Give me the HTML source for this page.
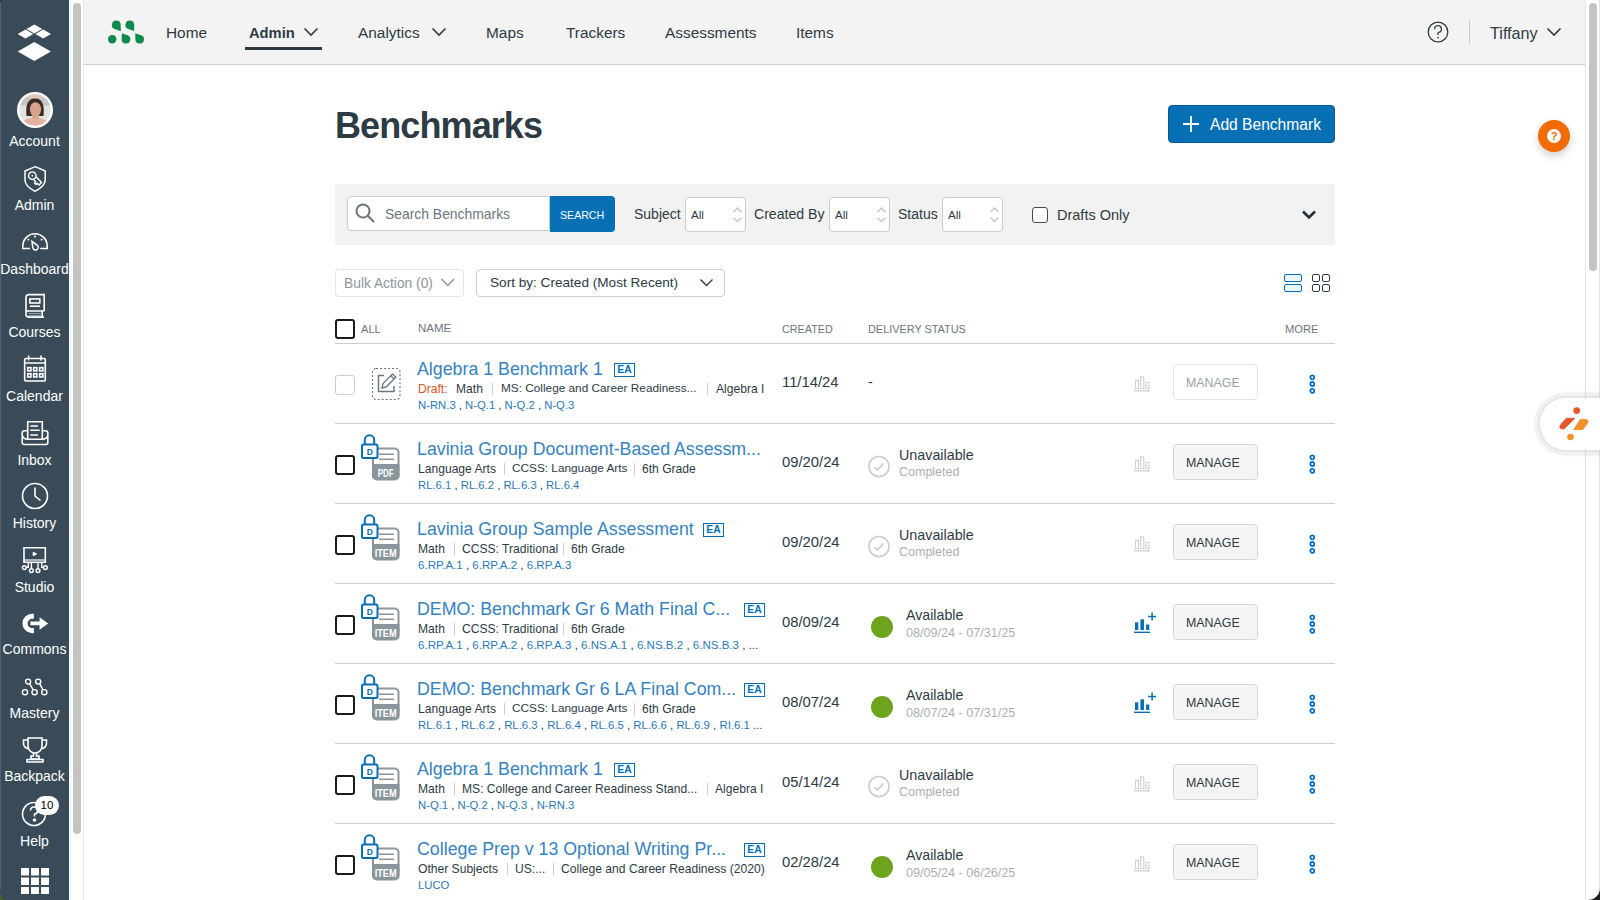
<!DOCTYPE html>
<html><head><meta charset="utf-8">
<style>
*{box-sizing:border-box;}
html,body{margin:0;padding:0;}
body{width:1600px;height:900px;overflow:hidden;position:relative;background:#fff;font-family:"Liberation Sans",sans-serif;color:#2d3b45;}
.a{position:absolute;}
.t{position:absolute;white-space:nowrap;line-height:1;}
/* sidebar */
#sb{position:absolute;left:0;top:0;width:69px;height:900px;background:#394b58;border-bottom-left-radius:8px;}
#sbedge{position:absolute;left:0;top:0;width:1px;height:890px;background:#56636c;}
#sbcorner{position:absolute;left:0;top:885px;width:12px;height:15px;background:#4c5e2a;}
.sbl{position:absolute;left:0;width:69px;text-align:center;color:#fff;font-size:14px;line-height:14px;white-space:nowrap;}
.sbi{position:absolute;left:21px;width:28px;height:28px;}
#lsc{position:absolute;left:69px;top:0;width:15px;height:900px;background:#fff;border-left:3px solid #f2f8fb;border-right:1px solid #e8e8e8;}
#lthumb{position:absolute;left:73px;top:3px;width:8px;height:831px;background:#c4c4c4;border-radius:4px;}
/* nav */
#nav{position:absolute;left:84px;top:0;width:1501px;height:65px;background:#f3f3f3;border-bottom:1px solid #c7cdd1;}
.nv{position:absolute;top:1px;font-size:15.4px;line-height:64px;color:#2d3b45;white-space:nowrap;}
/* right scrollbar */
#rsc{position:absolute;left:1585px;top:0;width:15px;height:900px;background:#fff;border-left:1px solid #e6e6e6;border-right:1px solid #e6e6e6;}
#rthumb{position:absolute;left:1589px;top:3px;width:8px;height:268px;background:#c4c4c4;border-radius:4px;}
</style></head>
<body>
<!-- SIDEBAR -->
<div id="sbcorner"></div>
<div id="sb">
  <!-- logo -->
  <svg class="a" style="left:17px;top:24px" width="36" height="38" viewBox="0 0 36 38">
    <polygon points="17.35,0.50 25.15,5.0 17.35,9.50 9.55,5.0" fill="#fff"/><polygon points="8.5,5.60 16.30,10.1 8.5,14.60 0.70,10.1" fill="#fff"/><polygon points="26.2,5.60 34.00,10.1 26.2,14.60 18.40,10.1" fill="#fff"/><polygon points="17.3,17.90 33.90,27.4 17.3,36.90 0.70,27.4" fill="#fff"/>
  </svg>
  <!-- avatar -->
  <svg class="a" style="left:17px;top:92px" width="36" height="36" viewBox="0 0 36 36">
    <defs><clipPath id="avc"><circle cx="18" cy="18" r="15.7"/></clipPath></defs>
    <circle cx="18" cy="18" r="18" fill="#fff"/>
    <g clip-path="url(#avc)">
      <rect x="0" y="0" width="36" height="36" fill="#e3e3e1"/>
      <rect x="0" y="0" width="36" height="6" fill="#e2c7bd"/>
      <rect x="0" y="6" width="36" height="7.5" fill="#c3c6c8"/>
      <path d="M9.5 24 C8.5 14 10 6.5 18 6.5 C26 6.5 27.5 14 26.5 24 Z" fill="#3b2b23"/>
      <ellipse cx="18.5" cy="17.5" rx="5.6" ry="7.3" fill="#d6a288"/>
      <ellipse cx="18" cy="36" rx="15" ry="10.5" fill="#e6b29e"/>
      <rect x="15.5" y="22" width="6" height="5" fill="#d6a288"/>
    </g>
  </svg>
  <div class="sbl" style="top:134px">Account</div>

  <!-- admin shield -->
  <svg class="a" style="left:21px;top:165px" width="28" height="28" viewBox="0 0 28 28" fill="none" stroke="#fff" stroke-width="1.5" stroke-linejoin="round">
    <path d="M14.3 1.6 L24.2 6 V15 C24.2 19.5 19.5 23.5 14 26.4 C8.5 23.5 4 19.5 4 15 V6 Z"/>
    <g transform="rotate(45 11.3 10.7)">
      <circle cx="11.3" cy="10.7" r="3.7"/>
      <circle cx="11.3" cy="10.7" r="0.9" fill="#fff" stroke="none"/>
      <path d="M15 8.9 H22.6 V12.5 H20.2 V14.2 H17.8 V12.5 H15"/>
    </g>
  </svg>
  <div class="sbl" style="top:198px">Admin</div>

  <!-- dashboard -->
  <svg class="a" style="left:21px;top:231px" width="28" height="22" viewBox="0 0 28 22" fill="none" stroke="#fff" stroke-width="1.6">
    <path d="M9 17.5 H1.8 V15 A12.2 12.2 0 0 1 26.2 15 V17.5 H19.2"/>
    <path d="M14 4.5 V6.5 M6.8 8 L8 9.2 M21.2 8 L20 9.2"/>
    <path d="M11.00 10.30 L16.12 14.14 A2.7 2.7 0 1 1 11.82 16.65 Z" stroke-width="1.5"/>
  </svg>
  <div class="sbl" style="top:262px">Dashboard</div>

  <!-- courses -->
  <svg class="a" style="left:21px;top:290px" width="28" height="30" viewBox="0 0 28 30" fill="none" stroke="#fff" stroke-width="1.6">
    <path d="M23.2 21 V4.6 H7.5 A2.5 2.5 0 0 0 5 7.1 V24.6 A2.5 2.5 0 0 0 7.5 27.1 H23"/>
    <path d="M5 21 H23.2 M21.2 21 V27.1"/>
    <path d="M7.5 23.5 H20.5 M7.5 25.5 H20.5" stroke="#9aa3aa" stroke-width="1.2"/>
    <rect x="8.9" y="8.9" width="9.9" height="4.1"/>
    <path d="M8.9 16.2 H19"/>
  </svg>
  <div class="sbl" style="top:325px">Courses</div>

  <!-- calendar -->
  <svg class="a" style="left:21px;top:352px" width="28" height="32" viewBox="0 0 28 32" fill="none" stroke="#fff" stroke-width="1.6">
    <rect x="3.65" y="6.5" width="20.65" height="22.5" rx="1.2"/>
    <path d="M3.65 11 H24.3 M7.6 3.6 V8.6 M20 3.6 V8.6"/>
    <rect x="6.75" y="15.65" width="3.2" height="3.2"/><rect x="12.65" y="15.65" width="3.2" height="3.2"/><rect x="18.65" y="15.65" width="3.2" height="3.2"/><rect x="6.75" y="21.75" width="3.2" height="3.2"/><rect x="12.65" y="21.75" width="3.2" height="3.2"/><rect x="18.65" y="21.75" width="3.2" height="3.2"/>
  </svg>
  <div class="sbl" style="top:389px">Calendar</div>

  <!-- inbox -->
  <svg class="a" style="left:21px;top:415px" width="28" height="32" viewBox="0 0 28 32" fill="none" stroke="#fff" stroke-width="1.6">
    <path d="M6.7 24 V6.8 H21.3 V24"/>
    <path d="M9.3 11 H17 M9.3 15.3 H18.7 M9.3 20 H17"/>
    <path d="M6.7 15.7 H3.5 A2.3 2.3 0 0 0 1.2 18 V27.5 A2 2 0 0 0 3.2 29.5 H24.8 A2 2 0 0 0 26.8 27.5 V18 A2.3 2.3 0 0 0 24.5 15.7 H21.3"/>
    <path d="M1.4 20.8 Q2.5 24.2 6.7 24.2 H21.3 Q25.5 24.2 26.6 20.8"/>
  </svg>
  <div class="sbl" style="top:453px">Inbox</div>

  <!-- history -->
  <svg class="sbi" style="top:482px" viewBox="0 0 28 28" fill="none" stroke="#fff" stroke-width="1.6">
    <circle cx="14" cy="14" r="12.5"/>
    <path d="M14 5.5 V14 L19.5 18.5"/>
  </svg>
  <div class="sbl" style="top:516px">History</div>

  <!-- studio -->
  <svg class="a" style="left:21px;top:546px" width="28" height="28" viewBox="0 0 28 28" fill="none" stroke="#fff" stroke-width="1.6">
    <path d="M3 1.7 H24.3 V16.3 H3 Z"/>
    <path d="M3 14 H24.3" stroke-width="1.2"/>
    <path d="M12.2 6.2 L15.6 8 L12.2 9.8 Z" fill="#fff" stroke-width="1"/>
    <path d="M7.3 16.5 V21.2 H5.3 M10.4 16.5 V22.6 M17 16.5 V22.6 M20.7 16.5 V21.2 H22.4" stroke-width="1.4"/>
    <circle cx="3.3" cy="21.6" r="1.9" stroke-width="1.4"/><circle cx="10.4" cy="24.6" r="1.9" stroke-width="1.4"/><circle cx="17" cy="24.6" r="1.9" stroke-width="1.4"/><circle cx="24.4" cy="21.6" r="1.9" stroke-width="1.4"/>
  </svg>
  <div class="sbl" style="top:580px">Studio</div>

  <!-- commons -->
  <svg class="a" style="left:18.6px;top:607.5px" width="32" height="32" viewBox="0 0 28 28">
    <path d="M13 5 H11.5 A8.5 8.5 0 0 0 11.5 22 H13 V17.5 H11.5 A4 4 0 0 1 11.5 9.5 H13 Z" fill="#fff"/>
    <path d="M10 11.8 H18 V8 L25.5 13.5 L18 19 V15.2 H10 Z" fill="#fff"/>
  </svg>
  <div class="sbl" style="top:642px">Commons</div>

  <!-- mastery -->
  <svg class="a" style="left:20px;top:676px" width="30" height="22" viewBox="0 0 30 22" fill="none" stroke="#fff" stroke-width="1.4">
    <circle cx="8.1" cy="5.6" r="2.5"/><circle cx="18.2" cy="5.6" r="2.5"/>
    <circle cx="5" cy="16.2" r="2.6"/><circle cx="14.6" cy="16.2" r="2.6"/><circle cx="24.3" cy="16.2" r="2.6"/>
    <path d="M9.6 7.6 L13.2 13.9 M19.7 7.6 L22.9 13.9"/>
  </svg>
  <div class="sbl" style="top:706px">Mastery</div>

  <!-- backpack/trophy -->
  <svg class="sbi" style="top:736px;left:21px" viewBox="0 0 28 28" fill="none" stroke="#fff" stroke-width="1.6">
    <path d="M7 2 H21 V10 A7 7 0 0 1 7 10 Z"/>
    <path d="M7 4 H2.5 V7 A5 5 0 0 0 7.5 12.5 M21 4 H25.5 V7 A5 5 0 0 1 20.5 12.5"/>
    <path d="M12.5 17 V20 H10 V23 H18 V20 H15.5 V17"/>
    <path d="M6 26 H22 V23.5 H6 Z"/>
  </svg>
  <div class="sbl" style="top:769px">Backpack</div>

  <!-- help -->
  <svg class="sbi" style="top:800px;left:21px" viewBox="0 0 28 28" fill="none" stroke="#fff" stroke-width="1.6">
    <circle cx="13" cy="14" r="11.5"/>
    <path d="M9.5 10.5 A3.5 3.5 0 1 1 13.5 14 V16.5"/>
    <circle cx="13.5" cy="20" r="1" fill="#fff"/>
  </svg>
  <div class="a" style="left:35px;top:796px;width:24px;height:19px;border-radius:10px;background:#fff;color:#000;font-size:11.5px;line-height:19px;text-align:center;">10</div>
  <div class="sbl" style="top:834px">Help</div>

  <!-- grid -->
  <svg class="a" style="left:21px;top:868px" width="28" height="26" viewBox="0 0 28 26">
    <g fill="#fff">
      <rect x="0" y="0" width="8" height="7.5"/><rect x="10" y="0" width="8" height="7.5"/><rect x="20" y="0" width="8" height="7.5"/>
      <rect x="0" y="9.5" width="8" height="7.5"/><rect x="10" y="9.5" width="8" height="7.5"/><rect x="20" y="9.5" width="8" height="7.5"/>
      <rect x="0" y="19" width="8" height="7.5"/><rect x="10" y="19" width="8" height="7.5"/><rect x="20" y="19" width="8" height="7.5"/>
    </g>
  </svg>
</div>
<div id="sbedge"></div>
<div id="lsc"></div>
<div id="lthumb"></div>

<!-- NAV -->
<div id="nav"></div>
<svg class="a" style="left:106px;top:18px" width="40" height="28" viewBox="0 0 40 28" fill="#0e8a4c">
  <path d="M14.80 13.30 L8.75 11.02 A4.4 4.4 0 1 1 14.70 6.83 Z"/>
  <path d="M28.20 13.10 L22.35 11.05 A4.4 4.4 0 1 1 28.20 6.90 Z"/>
  <path d="M15.80 15.20 L21.47 17.26 A4.3 4.3 0 1 1 15.70 21.23 Z"/>
  <path d="M29.20 15.20 L35.10 17.23 A4.3 4.3 0 1 1 29.40 21.44 Z"/>
  <circle cx="6.2" cy="21.3" r="4.2"/>
</svg>
<div class="nv" style="left:166px">Home</div>
<div class="nv" style="left:249px;font-weight:bold;font-size:14.7px">Admin</div>
<svg class="a" style="left:303px;top:27px" width="16" height="10" viewBox="0 0 16 10" fill="none" stroke="#2d3b45" stroke-width="1.6"><path d="M1.5 1.5 L8 8 L14.5 1.5"/></svg>
<div class="a" style="left:245px;top:47px;width:77px;height:3px;background:#2d3b45;"></div>
<div class="nv" style="left:358px">Analytics</div>
<svg class="a" style="left:431px;top:27px" width="16" height="10" viewBox="0 0 16 10" fill="none" stroke="#2d3b45" stroke-width="1.6"><path d="M1.5 1.5 L8 8 L14.5 1.5"/></svg>
<div class="nv" style="left:486px">Maps</div>
<div class="nv" style="left:566px">Trackers</div>
<div class="nv" style="left:665px">Assessments</div>
<div class="nv" style="left:796px">Items</div>
<svg class="a" style="left:1427px;top:21px" width="22" height="22" viewBox="0 0 22 22" fill="none" stroke="#2d3b45" stroke-width="1.3">
  <circle cx="11" cy="11" r="9.8"/>
  <path d="M7.6 8.2 A3.4 3.4 0 1 1 11.6 11.4 Q11 11.8 11 12.8 V14"/>
  <circle cx="11" cy="16.6" r="0.9" fill="#2d3b45" stroke="none"/>
</svg>
<div class="a" style="left:1469px;top:20px;width:1px;height:24px;background:#c7cdd1;"></div>
<div class="nv" style="left:1490px;font-size:16.2px">Tiffany</div>
<svg class="a" style="left:1546px;top:27px" width="16" height="10" viewBox="0 0 16 10" fill="none" stroke="#2d3b45" stroke-width="1.6"><path d="M1.5 1.5 L8 8 L14.5 1.5"/></svg>
<!-- CONTENT -->
<div class="t" style="left:335px;top:108px;font-size:36px;color:#2d3b45;font-weight:bold;letter-spacing:-0.9px;">Benchmarks</div>
<div class="a" style="left:1168px;top:105px;width:167px;height:38px;background:#0770b5;border:1px solid #055d96;border-radius:4px;"></div>
<div class="a" style="left:1183px;top:123px;width:16px;height:2px;background:#fff;"></div>
<div class="a" style="left:1190px;top:116px;width:2px;height:16px;background:#fff;"></div>
<div class="t" style="left:1210px;top:117px;font-size:15.6px;color:#fff;font-weight:normal;">Add Benchmark</div>
<div class="a" style="left:335px;top:184px;width:1000px;height:61px;background:#f2f2f2;"></div>
<div class="a" style="left:347px;top:196px;width:203px;height:35px;background:#fff;border:1px solid #c7cdd1;border-radius:4px 0 0 4px;"></div>
<svg class="a" style="left:355px;top:203px" width="21" height="21" viewBox="0 0 21 21" fill="none" stroke="#6b7780" stroke-width="2"><circle cx="8" cy="8" r="6.5"/><path d="M12.8 12.8 L19 19"/></svg>
<div class="t" style="left:385px;top:208px;font-size:13.9px;color:#6b7780;font-weight:normal;">Search Benchmarks</div>
<div class="a" style="left:550px;top:196px;width:65px;height:36px;background:#0770b5;border-radius:0 4px 4px 0;"></div>
<div class="t" style="left:560px;top:210px;font-size:10.6px;color:#fff;font-weight:normal;">SEARCH</div>
<div class="t" style="left:634px;top:207px;font-size:14.0px;color:#2d3b45;font-weight:normal;">Subject</div>
<div class="a" style="left:685px;top:197px;width:61px;height:35px;background:#fff;border:1px solid #c7cdd1;border-radius:4px;"></div>
<div class="t" style="left:691px;top:209px;font-size:11.6px;color:#2d3b45;font-weight:normal;">All</div>
<svg class="a" style="left:732px;top:206px" width="11" height="18" viewBox="0 0 11 18" fill="none" stroke="#c0c6ca" stroke-width="1.3"><path d="M1.5 6 L5.5 2 L9.5 6 M1.5 11.5 L5.5 15.5 L9.5 11.5"/></svg>
<div class="t" style="left:754px;top:207px;font-size:14.1px;color:#2d3b45;font-weight:normal;">Created By</div>
<div class="a" style="left:829px;top:197px;width:61px;height:35px;background:#fff;border:1px solid #c7cdd1;border-radius:4px;"></div>
<div class="t" style="left:835px;top:209px;font-size:11.6px;color:#2d3b45;font-weight:normal;">All</div>
<svg class="a" style="left:876px;top:206px" width="11" height="18" viewBox="0 0 11 18" fill="none" stroke="#c0c6ca" stroke-width="1.3"><path d="M1.5 6 L5.5 2 L9.5 6 M1.5 11.5 L5.5 15.5 L9.5 11.5"/></svg>
<div class="t" style="left:898px;top:207px;font-size:14.0px;color:#2d3b45;font-weight:normal;">Status</div>
<div class="a" style="left:942px;top:197px;width:61px;height:35px;background:#fff;border:1px solid #c7cdd1;border-radius:4px;"></div>
<div class="t" style="left:948px;top:209px;font-size:11.6px;color:#2d3b45;font-weight:normal;">All</div>
<svg class="a" style="left:989px;top:206px" width="11" height="18" viewBox="0 0 11 18" fill="none" stroke="#c0c6ca" stroke-width="1.3"><path d="M1.5 6 L5.5 2 L9.5 6 M1.5 11.5 L5.5 15.5 L9.5 11.5"/></svg>
<div class="a" style="left:1032px;top:207px;width:16px;height:16px;background:#fff;border:1.5px solid #3f4d59;border-radius:3px;"></div>
<div class="t" style="left:1057px;top:208px;font-size:14.5px;color:#2d3b45;font-weight:normal;">Drafts Only</div>
<svg class="a" style="left:1301px;top:209px" width="16" height="12" viewBox="0 0 16 12" fill="none" stroke="#1f2d38" stroke-width="2.5"><path d="M2 2.5 L8 8.5 L14 2.5"/></svg>
<div class="a" style="left:335px;top:269px;width:129px;height:28px;background:#fff;border:1px solid #e3e6e8;border-radius:4px;"></div>
<div class="t" style="left:344px;top:277px;font-size:13.8px;color:#8d969c;font-weight:normal;">Bulk Action (0)</div>
<svg class="a" style="left:440px;top:277px" width="16" height="12" viewBox="0 0 16 12" fill="none" stroke="#8d969c" stroke-width="1.5"><path d="M1.5 2 L7.8 8.5 L14 2"/></svg>
<div class="a" style="left:476px;top:269px;width:249px;height:28px;background:#fff;border:1px solid #c7cdd1;border-radius:4px;"></div>
<div class="t" style="left:490px;top:276px;font-size:13.6px;color:#2d3b45;font-weight:normal;">Sort by: Created (Most Recent)</div>
<svg class="a" style="left:699px;top:277px" width="15" height="11" viewBox="0 0 15 11" fill="none" stroke="#2d3b45" stroke-width="1.4"><path d="M1.5 2.5 L7.5 8.5 L13.5 2.5"/></svg>
<div class="a" style="left:1284px;top:274px;width:18px;height:8px;border:1.7px solid #0770b5;background:#eaf6fd;border-radius:2px;"></div>
<div class="a" style="left:1284px;top:284px;width:18px;height:8px;border:1.7px solid #0770b5;background:#eaf6fd;border-radius:2px;"></div>
<div class="a" style="left:1312px;top:274px;width:8px;height:8px;border:1.7px solid #2d3b45;border-radius:2px;"></div>
<div class="a" style="left:1312px;top:284px;width:8px;height:8px;border:1.7px solid #2d3b45;border-radius:2px;"></div>
<div class="a" style="left:1322px;top:274px;width:8px;height:8px;border:1.7px solid #2d3b45;border-radius:2px;"></div>
<div class="a" style="left:1322px;top:284px;width:8px;height:8px;border:1.7px solid #2d3b45;border-radius:2px;"></div>
<div class="a" style="left:335px;top:319px;width:20px;height:20px;border:2px solid #1b1b1b;border-radius:3px;"></div>
<div class="t" style="left:361px;top:324px;font-size:11.1px;color:#6b7780;font-weight:normal;">ALL</div>
<div class="t" style="left:418px;top:323px;font-size:11.5px;color:#6b7780;font-weight:normal;">NAME</div>
<div class="t" style="left:782px;top:324px;font-size:10.8px;color:#6b7780;font-weight:normal;">CREATED</div>
<div class="t" style="left:868px;top:324px;font-size:10.9px;color:#6b7780;font-weight:normal;">DELIVERY STATUS</div>
<div class="t" style="left:1285px;top:324px;font-size:11.2px;color:#6b7780;font-weight:normal;">MORE</div>
<div class="a" style="left:335px;top:343px;width:1000px;height:1px;background:#c7cdd1;"></div>
<div class="a" style="left:335px;top:375px;width:20px;height:20px;border:1.3px solid #c7cdd1;border-radius:3px;"></div>
<svg class="a" style="left:370px;top:367px" width="32" height="34" viewBox="0 0 32 34">
<rect x="2.5" y="1.5" width="27.5" height="31" rx="3.5" fill="none" stroke="#6b7780" stroke-width="1.2" stroke-dasharray="2 2"/>
<path d="M14 8.5 H8.5 V24.5 H24 V19" fill="none" stroke="#6b7780" stroke-width="1.5"/>
<path d="M12 21 L13 16.5 L22.5 7 L25.8 10.3 L16.3 19.8 Z M20.8 8.7 L24.1 12" fill="none" stroke="#6b7780" stroke-width="1.3"/>
</svg>
<div class="t" style="left:417px;top:361px;font-size:17.8px;color:#3583c0;font-weight:normal;">Algebra 1 Benchmark 1</div>
<div class="a" style="left:614px;top:363px;width:21px;height:14px;border:1.5px solid #0770b5;color:#0770b5;font-size:10.4px;font-weight:bold;line-height:12.5px;text-align:center;letter-spacing:0px;">EA</div>
<div class="t" style="left:418px;top:382.5px;font-size:12.1px;color:#e0561f;font-weight:normal;">Draft:</div>
<div class="t" style="left:456px;top:382.5px;font-size:12.1px;color:#2d3b45;font-weight:normal;">Math</div>
<div class="a" style="left:492px;top:383px;width:1px;height:12px;background:#c7cdd1;"></div>
<div class="t" style="left:501px;top:382.5px;font-size:11.8px;color:#2d3b45;font-weight:normal;">MS: College and Career Readiness...</div>
<div class="a" style="left:707px;top:383px;width:1px;height:12px;background:#c7cdd1;"></div>
<div class="t" style="left:716px;top:382.5px;font-size:12.1px;color:#2d3b45;font-weight:normal;">Algebra I</div>
<div class="t" style="left:418px;top:399.5px;font-size:11.3px;color:#2a7ab9;font-weight:normal;">N-RN.3 <span style="color:#2d3b45">,</span> N-Q.1 <span style="color:#2d3b45">,</span> N-Q.2 <span style="color:#2d3b45">,</span> N-Q.3</div>
<div class="t" style="left:782px;top:375px;font-size:14.8px;color:#2d3b45;font-weight:normal;">11/14/24</div>
<div class="t" style="left:868px;top:375px;font-size:14px;color:#2d3b45;font-weight:normal;">-</div>
<svg class="a" style="left:1133px;top:375px" width="18" height="18" viewBox="0 0 18 18" fill="none" stroke="#ccd1d4" stroke-width="1.1">
<rect x="2.5" y="5.5" width="3" height="8"/><rect x="7.8" y="1.8" width="3" height="11.7"/><rect x="13" y="7.5" width="3" height="6"/>
<path d="M1 15.8 H17" stroke-width="1.4"/></svg>
<div class="a" style="left:1173px;top:364px;width:85px;height:36px;background:#fff;border:1px solid #e3e6e8;border-radius:4px;"></div>
<div class="t" style="left:1186px;top:377px;font-size:12.4px;color:#9aa3a8;font-weight:normal;">MANAGE</div>
<svg class="a" style="left:1308px;top:373px" width="9" height="22" viewBox="0 0 9 22" fill="none" stroke="#0770b5" stroke-width="1.8">
<circle cx="4.3" cy="4.3" r="2"/><circle cx="4.3" cy="11" r="2"/><circle cx="4.3" cy="17.8" r="2"/></svg>
<div class="a" style="left:335px;top:423px;width:1000px;height:1px;background:#c7cdd1;"></div>
<div class="a" style="left:335px;top:455px;width:20px;height:20px;border:2px solid #1b1b1b;border-radius:3px;"></div>
<svg class="a" style="left:359px;top:433px" width="44" height="50" viewBox="0 0 44 50">
<rect x="14" y="15.5" width="25.5" height="31" rx="4" fill="#fff" stroke="#8a959c" stroke-width="2"/>
<path d="M13 31 H40.5 V42.5 A4 4 0 0 1 36.5 46.5 H17 A4 4 0 0 1 13 42.5 Z" fill="#8a959c"/>
<path d="M20 21.3 H35 M20 26.2 H35" stroke="#8a959c" stroke-width="1.6"/>
<text x="26.7" y="44" text-anchor="middle" font-family="Liberation Sans" font-weight="bold" font-size="10.5" fill="#fff" textLength="16" lengthAdjust="spacingAndGlyphs">PDF</text>
<path d="M5.8 11.5 V7 A4.7 4.7 0 0 1 15.2 7 V11.5" fill="none" stroke="#0770b5" stroke-width="2"/>
<rect x="3" y="11.5" width="15.5" height="13.5" rx="1.5" fill="#fff" stroke="#0770b5" stroke-width="2"/>
<text x="10.8" y="22" text-anchor="middle" font-family="Liberation Sans" font-weight="bold" font-size="8.5" fill="#0770b5">D</text>
</svg>
<div class="t" style="left:417px;top:441px;font-size:17.8px;color:#3583c0;font-weight:normal;">Lavinia Group Document-Based Assessm...</div>
<div class="t" style="left:418px;top:462.5px;font-size:12.1px;color:#2d3b45;font-weight:normal;">Language Arts</div>
<div class="a" style="left:504px;top:463px;width:1px;height:12px;background:#c7cdd1;"></div>
<div class="t" style="left:512px;top:462.5px;font-size:11.8px;color:#2d3b45;font-weight:normal;">CCSS: Language Arts</div>
<div class="a" style="left:634px;top:463px;width:1px;height:12px;background:#c7cdd1;"></div>
<div class="t" style="left:642px;top:462.5px;font-size:12.1px;color:#2d3b45;font-weight:normal;">6th Grade</div>
<div class="t" style="left:418px;top:479.5px;font-size:11.3px;color:#2a7ab9;font-weight:normal;">RL.6.1 <span style="color:#2d3b45">,</span> RL.6.2 <span style="color:#2d3b45">,</span> RL.6.3 <span style="color:#2d3b45">,</span> RL.6.4</div>
<div class="t" style="left:782px;top:455px;font-size:14.8px;color:#2d3b45;font-weight:normal;">09/20/24</div>
<svg class="a" style="left:867px;top:455px" width="24" height="24" viewBox="0 0 24 24" fill="none" stroke="#c7cdd1" stroke-width="1.6">
<circle cx="12" cy="11.5" r="10"/><path d="M7.5 12 L10.5 15 L16.5 8.5"/></svg>
<div class="t" style="left:899px;top:448px;font-size:14.3px;color:#2d3b45;font-weight:normal;">Unavailable</div>
<div class="t" style="left:899px;top:466px;font-size:12.5px;color:#a9b0b5;font-weight:normal;">Completed</div>
<svg class="a" style="left:1133px;top:455px" width="18" height="18" viewBox="0 0 18 18" fill="none" stroke="#ccd1d4" stroke-width="1.1">
<rect x="2.5" y="5.5" width="3" height="8"/><rect x="7.8" y="1.8" width="3" height="11.7"/><rect x="13" y="7.5" width="3" height="6"/>
<path d="M1 15.8 H17" stroke-width="1.4"/></svg>
<div class="a" style="left:1173px;top:444px;width:85px;height:36px;background:#f5f5f5;border:1px solid #d3d7da;border-radius:4px;"></div>
<div class="t" style="left:1186px;top:457px;font-size:12.4px;color:#2d3b45;font-weight:normal;">MANAGE</div>
<svg class="a" style="left:1308px;top:453px" width="9" height="22" viewBox="0 0 9 22" fill="none" stroke="#0770b5" stroke-width="1.8">
<circle cx="4.3" cy="4.3" r="2"/><circle cx="4.3" cy="11" r="2"/><circle cx="4.3" cy="17.8" r="2"/></svg>
<div class="a" style="left:335px;top:503px;width:1000px;height:1px;background:#c7cdd1;"></div>
<div class="a" style="left:335px;top:535px;width:20px;height:20px;border:2px solid #1b1b1b;border-radius:3px;"></div>
<svg class="a" style="left:359px;top:513px" width="44" height="50" viewBox="0 0 44 50">
<rect x="14" y="15.5" width="25.5" height="31" rx="4" fill="#fff" stroke="#8a959c" stroke-width="2"/>
<path d="M13 31 H40.5 V42.5 A4 4 0 0 1 36.5 46.5 H17 A4 4 0 0 1 13 42.5 Z" fill="#8a959c"/>
<path d="M20 21.3 H35 M20 26.2 H35" stroke="#8a959c" stroke-width="1.6"/>
<text x="26.7" y="44" text-anchor="middle" font-family="Liberation Sans" font-weight="bold" font-size="10.8" fill="#fff" textLength="22" lengthAdjust="spacingAndGlyphs">ITEM</text>
<path d="M5.8 11.5 V7 A4.7 4.7 0 0 1 15.2 7 V11.5" fill="none" stroke="#0770b5" stroke-width="2"/>
<rect x="3" y="11.5" width="15.5" height="13.5" rx="1.5" fill="#fff" stroke="#0770b5" stroke-width="2"/>
<text x="10.8" y="22" text-anchor="middle" font-family="Liberation Sans" font-weight="bold" font-size="8.5" fill="#0770b5">D</text>
</svg>
<div class="t" style="left:417px;top:521px;font-size:17.8px;color:#3583c0;font-weight:normal;">Lavinia Group Sample Assessment</div>
<div class="a" style="left:703px;top:523px;width:21px;height:14px;border:1.5px solid #0770b5;color:#0770b5;font-size:10.4px;font-weight:bold;line-height:12.5px;text-align:center;letter-spacing:0px;">EA</div>
<div class="t" style="left:418px;top:542.5px;font-size:12.1px;color:#2d3b45;font-weight:normal;">Math</div>
<div class="a" style="left:454px;top:543px;width:1px;height:12px;background:#c7cdd1;"></div>
<div class="t" style="left:462px;top:542.5px;font-size:12.1px;color:#2d3b45;font-weight:normal;">CCSS: Traditional</div>
<div class="a" style="left:563px;top:543px;width:1px;height:12px;background:#c7cdd1;"></div>
<div class="t" style="left:571px;top:542.5px;font-size:12.1px;color:#2d3b45;font-weight:normal;">6th Grade</div>
<div class="t" style="left:418px;top:559.5px;font-size:11.55px;color:#2a7ab9;font-weight:normal;">6.RP.A.1 <span style="color:#2d3b45">,</span> 6.RP.A.2 <span style="color:#2d3b45">,</span> 6.RP.A.3</div>
<div class="t" style="left:782px;top:535px;font-size:14.8px;color:#2d3b45;font-weight:normal;">09/20/24</div>
<svg class="a" style="left:867px;top:535px" width="24" height="24" viewBox="0 0 24 24" fill="none" stroke="#c7cdd1" stroke-width="1.6">
<circle cx="12" cy="11.5" r="10"/><path d="M7.5 12 L10.5 15 L16.5 8.5"/></svg>
<div class="t" style="left:899px;top:528px;font-size:14.3px;color:#2d3b45;font-weight:normal;">Unavailable</div>
<div class="t" style="left:899px;top:546px;font-size:12.5px;color:#a9b0b5;font-weight:normal;">Completed</div>
<svg class="a" style="left:1133px;top:535px" width="18" height="18" viewBox="0 0 18 18" fill="none" stroke="#ccd1d4" stroke-width="1.1">
<rect x="2.5" y="5.5" width="3" height="8"/><rect x="7.8" y="1.8" width="3" height="11.7"/><rect x="13" y="7.5" width="3" height="6"/>
<path d="M1 15.8 H17" stroke-width="1.4"/></svg>
<div class="a" style="left:1173px;top:524px;width:85px;height:36px;background:#f5f5f5;border:1px solid #d3d7da;border-radius:4px;"></div>
<div class="t" style="left:1186px;top:537px;font-size:12.4px;color:#2d3b45;font-weight:normal;">MANAGE</div>
<svg class="a" style="left:1308px;top:533px" width="9" height="22" viewBox="0 0 9 22" fill="none" stroke="#0770b5" stroke-width="1.8">
<circle cx="4.3" cy="4.3" r="2"/><circle cx="4.3" cy="11" r="2"/><circle cx="4.3" cy="17.8" r="2"/></svg>
<div class="a" style="left:335px;top:583px;width:1000px;height:1px;background:#c7cdd1;"></div>
<div class="a" style="left:335px;top:615px;width:20px;height:20px;border:2px solid #1b1b1b;border-radius:3px;"></div>
<svg class="a" style="left:359px;top:593px" width="44" height="50" viewBox="0 0 44 50">
<rect x="14" y="15.5" width="25.5" height="31" rx="4" fill="#fff" stroke="#8a959c" stroke-width="2"/>
<path d="M13 31 H40.5 V42.5 A4 4 0 0 1 36.5 46.5 H17 A4 4 0 0 1 13 42.5 Z" fill="#8a959c"/>
<path d="M20 21.3 H35 M20 26.2 H35" stroke="#8a959c" stroke-width="1.6"/>
<text x="26.7" y="44" text-anchor="middle" font-family="Liberation Sans" font-weight="bold" font-size="10.8" fill="#fff" textLength="22" lengthAdjust="spacingAndGlyphs">ITEM</text>
<path d="M5.8 11.5 V7 A4.7 4.7 0 0 1 15.2 7 V11.5" fill="none" stroke="#0770b5" stroke-width="2"/>
<rect x="3" y="11.5" width="15.5" height="13.5" rx="1.5" fill="#fff" stroke="#0770b5" stroke-width="2"/>
<text x="10.8" y="22" text-anchor="middle" font-family="Liberation Sans" font-weight="bold" font-size="8.5" fill="#0770b5">D</text>
</svg>
<div class="t" style="left:417px;top:601px;font-size:17.8px;color:#3583c0;font-weight:normal;">DEMO: Benchmark Gr 6 Math Final C...</div>
<div class="a" style="left:744px;top:603px;width:21px;height:14px;border:1.5px solid #0770b5;color:#0770b5;font-size:10.4px;font-weight:bold;line-height:12.5px;text-align:center;letter-spacing:0px;">EA</div>
<div class="t" style="left:418px;top:622.5px;font-size:12.1px;color:#2d3b45;font-weight:normal;">Math</div>
<div class="a" style="left:454px;top:623px;width:1px;height:12px;background:#c7cdd1;"></div>
<div class="t" style="left:462px;top:622.5px;font-size:12.1px;color:#2d3b45;font-weight:normal;">CCSS: Traditional</div>
<div class="a" style="left:563px;top:623px;width:1px;height:12px;background:#c7cdd1;"></div>
<div class="t" style="left:571px;top:622.5px;font-size:12.1px;color:#2d3b45;font-weight:normal;">6th Grade</div>
<div class="t" style="left:418px;top:639.5px;font-size:11.55px;color:#2a7ab9;font-weight:normal;">6.RP.A.1 <span style="color:#2d3b45">,</span> 6.RP.A.2 <span style="color:#2d3b45">,</span> 6.RP.A.3 <span style="color:#2d3b45">,</span> 6.NS.A.1 <span style="color:#2d3b45">,</span> 6.NS.B.2 <span style="color:#2d3b45">,</span> 6.NS.B.3 <span style="color:#2d3b45">, ...</span></div>
<div class="t" style="left:782px;top:615px;font-size:14.8px;color:#2d3b45;font-weight:normal;">08/09/24</div>
<div class="a" style="left:871px;top:616px;width:22px;height:22px;border-radius:50%;background:#6ca41e;"></div>
<div class="t" style="left:906px;top:608px;font-size:14.2px;color:#2d3b45;font-weight:normal;">Available</div>
<div class="t" style="left:906px;top:627px;font-size:12.6px;color:#a9b0b5;font-weight:normal;">08/09/24 - 07/31/25</div>
<svg class="a" style="left:1133px;top:611px" width="26" height="24" viewBox="0 0 26 24" fill="#0770b5">
<rect x="2" y="11.3" width="3.3" height="7.7"/><rect x="7.4" y="8.3" width="3.6" height="10.7"/><rect x="13" y="13.5" width="3.3" height="5.5"/>
<rect x="1" y="20.6" width="16" height="1.4"/><rect x="15.1" y="4.8" width="8" height="1.5"/><rect x="18.35" y="1.5" width="1.5" height="8"/></svg>
<div class="a" style="left:1173px;top:604px;width:85px;height:36px;background:#f5f5f5;border:1px solid #d3d7da;border-radius:4px;"></div>
<div class="t" style="left:1186px;top:617px;font-size:12.4px;color:#2d3b45;font-weight:normal;">MANAGE</div>
<svg class="a" style="left:1308px;top:613px" width="9" height="22" viewBox="0 0 9 22" fill="none" stroke="#0770b5" stroke-width="1.8">
<circle cx="4.3" cy="4.3" r="2"/><circle cx="4.3" cy="11" r="2"/><circle cx="4.3" cy="17.8" r="2"/></svg>
<div class="a" style="left:335px;top:663px;width:1000px;height:1px;background:#c7cdd1;"></div>
<div class="a" style="left:335px;top:695px;width:20px;height:20px;border:2px solid #1b1b1b;border-radius:3px;"></div>
<svg class="a" style="left:359px;top:673px" width="44" height="50" viewBox="0 0 44 50">
<rect x="14" y="15.5" width="25.5" height="31" rx="4" fill="#fff" stroke="#8a959c" stroke-width="2"/>
<path d="M13 31 H40.5 V42.5 A4 4 0 0 1 36.5 46.5 H17 A4 4 0 0 1 13 42.5 Z" fill="#8a959c"/>
<path d="M20 21.3 H35 M20 26.2 H35" stroke="#8a959c" stroke-width="1.6"/>
<text x="26.7" y="44" text-anchor="middle" font-family="Liberation Sans" font-weight="bold" font-size="10.8" fill="#fff" textLength="22" lengthAdjust="spacingAndGlyphs">ITEM</text>
<path d="M5.8 11.5 V7 A4.7 4.7 0 0 1 15.2 7 V11.5" fill="none" stroke="#0770b5" stroke-width="2"/>
<rect x="3" y="11.5" width="15.5" height="13.5" rx="1.5" fill="#fff" stroke="#0770b5" stroke-width="2"/>
<text x="10.8" y="22" text-anchor="middle" font-family="Liberation Sans" font-weight="bold" font-size="8.5" fill="#0770b5">D</text>
</svg>
<div class="t" style="left:417px;top:681px;font-size:17.8px;color:#3583c0;font-weight:normal;">DEMO: Benchmark Gr 6 LA Final Com...</div>
<div class="a" style="left:744px;top:683px;width:21px;height:14px;border:1.5px solid #0770b5;color:#0770b5;font-size:10.4px;font-weight:bold;line-height:12.5px;text-align:center;letter-spacing:0px;">EA</div>
<div class="t" style="left:418px;top:702.5px;font-size:12.1px;color:#2d3b45;font-weight:normal;">Language Arts</div>
<div class="a" style="left:504px;top:703px;width:1px;height:12px;background:#c7cdd1;"></div>
<div class="t" style="left:512px;top:702.5px;font-size:11.8px;color:#2d3b45;font-weight:normal;">CCSS: Language Arts</div>
<div class="a" style="left:634px;top:703px;width:1px;height:12px;background:#c7cdd1;"></div>
<div class="t" style="left:642px;top:702.5px;font-size:12.1px;color:#2d3b45;font-weight:normal;">6th Grade</div>
<div class="t" style="left:418px;top:719.5px;font-size:11.4px;color:#2a7ab9;font-weight:normal;">RL.6.1 <span style="color:#2d3b45">,</span> RL.6.2 <span style="color:#2d3b45">,</span> RL.6.3 <span style="color:#2d3b45">,</span> RL.6.4 <span style="color:#2d3b45">,</span> RL.6.5 <span style="color:#2d3b45">,</span> RL.6.6 <span style="color:#2d3b45">,</span> RL.6.9 <span style="color:#2d3b45">,</span> RI.6.1 <span style="color:#2d3b45">...</span></div>
<div class="t" style="left:782px;top:695px;font-size:14.8px;color:#2d3b45;font-weight:normal;">08/07/24</div>
<div class="a" style="left:871px;top:696px;width:22px;height:22px;border-radius:50%;background:#6ca41e;"></div>
<div class="t" style="left:906px;top:688px;font-size:14.2px;color:#2d3b45;font-weight:normal;">Available</div>
<div class="t" style="left:906px;top:707px;font-size:12.6px;color:#a9b0b5;font-weight:normal;">08/07/24 - 07/31/25</div>
<svg class="a" style="left:1133px;top:691px" width="26" height="24" viewBox="0 0 26 24" fill="#0770b5">
<rect x="2" y="11.3" width="3.3" height="7.7"/><rect x="7.4" y="8.3" width="3.6" height="10.7"/><rect x="13" y="13.5" width="3.3" height="5.5"/>
<rect x="1" y="20.6" width="16" height="1.4"/><rect x="15.1" y="4.8" width="8" height="1.5"/><rect x="18.35" y="1.5" width="1.5" height="8"/></svg>
<div class="a" style="left:1173px;top:684px;width:85px;height:36px;background:#f5f5f5;border:1px solid #d3d7da;border-radius:4px;"></div>
<div class="t" style="left:1186px;top:697px;font-size:12.4px;color:#2d3b45;font-weight:normal;">MANAGE</div>
<svg class="a" style="left:1308px;top:693px" width="9" height="22" viewBox="0 0 9 22" fill="none" stroke="#0770b5" stroke-width="1.8">
<circle cx="4.3" cy="4.3" r="2"/><circle cx="4.3" cy="11" r="2"/><circle cx="4.3" cy="17.8" r="2"/></svg>
<div class="a" style="left:335px;top:743px;width:1000px;height:1px;background:#c7cdd1;"></div>
<div class="a" style="left:335px;top:775px;width:20px;height:20px;border:2px solid #1b1b1b;border-radius:3px;"></div>
<svg class="a" style="left:359px;top:753px" width="44" height="50" viewBox="0 0 44 50">
<rect x="14" y="15.5" width="25.5" height="31" rx="4" fill="#fff" stroke="#8a959c" stroke-width="2"/>
<path d="M13 31 H40.5 V42.5 A4 4 0 0 1 36.5 46.5 H17 A4 4 0 0 1 13 42.5 Z" fill="#8a959c"/>
<path d="M20 21.3 H35 M20 26.2 H35" stroke="#8a959c" stroke-width="1.6"/>
<text x="26.7" y="44" text-anchor="middle" font-family="Liberation Sans" font-weight="bold" font-size="10.8" fill="#fff" textLength="22" lengthAdjust="spacingAndGlyphs">ITEM</text>
<path d="M5.8 11.5 V7 A4.7 4.7 0 0 1 15.2 7 V11.5" fill="none" stroke="#0770b5" stroke-width="2"/>
<rect x="3" y="11.5" width="15.5" height="13.5" rx="1.5" fill="#fff" stroke="#0770b5" stroke-width="2"/>
<text x="10.8" y="22" text-anchor="middle" font-family="Liberation Sans" font-weight="bold" font-size="8.5" fill="#0770b5">D</text>
</svg>
<div class="t" style="left:417px;top:761px;font-size:17.8px;color:#3583c0;font-weight:normal;">Algebra 1 Benchmark 1</div>
<div class="a" style="left:614px;top:763px;width:21px;height:14px;border:1.5px solid #0770b5;color:#0770b5;font-size:10.4px;font-weight:bold;line-height:12.5px;text-align:center;letter-spacing:0px;">EA</div>
<div class="t" style="left:418px;top:782.5px;font-size:12.1px;color:#2d3b45;font-weight:normal;">Math</div>
<div class="a" style="left:454px;top:783px;width:1px;height:12px;background:#c7cdd1;"></div>
<div class="t" style="left:462px;top:782.5px;font-size:12.1px;color:#2d3b45;font-weight:normal;">MS: College and Career Readiness Stand...</div>
<div class="a" style="left:707px;top:783px;width:1px;height:12px;background:#c7cdd1;"></div>
<div class="t" style="left:715px;top:782.5px;font-size:12.1px;color:#2d3b45;font-weight:normal;">Algebra I</div>
<div class="t" style="left:418px;top:799.5px;font-size:11.3px;color:#2a7ab9;font-weight:normal;">N-Q.1 <span style="color:#2d3b45">,</span> N-Q.2 <span style="color:#2d3b45">,</span> N-Q.3 <span style="color:#2d3b45">,</span> N-RN.3</div>
<div class="t" style="left:782px;top:775px;font-size:14.8px;color:#2d3b45;font-weight:normal;">05/14/24</div>
<svg class="a" style="left:867px;top:775px" width="24" height="24" viewBox="0 0 24 24" fill="none" stroke="#c7cdd1" stroke-width="1.6">
<circle cx="12" cy="11.5" r="10"/><path d="M7.5 12 L10.5 15 L16.5 8.5"/></svg>
<div class="t" style="left:899px;top:768px;font-size:14.3px;color:#2d3b45;font-weight:normal;">Unavailable</div>
<div class="t" style="left:899px;top:786px;font-size:12.5px;color:#a9b0b5;font-weight:normal;">Completed</div>
<svg class="a" style="left:1133px;top:775px" width="18" height="18" viewBox="0 0 18 18" fill="none" stroke="#ccd1d4" stroke-width="1.1">
<rect x="2.5" y="5.5" width="3" height="8"/><rect x="7.8" y="1.8" width="3" height="11.7"/><rect x="13" y="7.5" width="3" height="6"/>
<path d="M1 15.8 H17" stroke-width="1.4"/></svg>
<div class="a" style="left:1173px;top:764px;width:85px;height:36px;background:#f5f5f5;border:1px solid #d3d7da;border-radius:4px;"></div>
<div class="t" style="left:1186px;top:777px;font-size:12.4px;color:#2d3b45;font-weight:normal;">MANAGE</div>
<svg class="a" style="left:1308px;top:773px" width="9" height="22" viewBox="0 0 9 22" fill="none" stroke="#0770b5" stroke-width="1.8">
<circle cx="4.3" cy="4.3" r="2"/><circle cx="4.3" cy="11" r="2"/><circle cx="4.3" cy="17.8" r="2"/></svg>
<div class="a" style="left:335px;top:823px;width:1000px;height:1px;background:#c7cdd1;"></div>
<div class="a" style="left:335px;top:855px;width:20px;height:20px;border:2px solid #1b1b1b;border-radius:3px;"></div>
<svg class="a" style="left:359px;top:833px" width="44" height="50" viewBox="0 0 44 50">
<rect x="14" y="15.5" width="25.5" height="31" rx="4" fill="#fff" stroke="#8a959c" stroke-width="2"/>
<path d="M13 31 H40.5 V42.5 A4 4 0 0 1 36.5 46.5 H17 A4 4 0 0 1 13 42.5 Z" fill="#8a959c"/>
<path d="M20 21.3 H35 M20 26.2 H35" stroke="#8a959c" stroke-width="1.6"/>
<text x="26.7" y="44" text-anchor="middle" font-family="Liberation Sans" font-weight="bold" font-size="10.8" fill="#fff" textLength="22" lengthAdjust="spacingAndGlyphs">ITEM</text>
<path d="M5.8 11.5 V7 A4.7 4.7 0 0 1 15.2 7 V11.5" fill="none" stroke="#0770b5" stroke-width="2"/>
<rect x="3" y="11.5" width="15.5" height="13.5" rx="1.5" fill="#fff" stroke="#0770b5" stroke-width="2"/>
<text x="10.8" y="22" text-anchor="middle" font-family="Liberation Sans" font-weight="bold" font-size="8.5" fill="#0770b5">D</text>
</svg>
<div class="t" style="left:417px;top:841px;font-size:17.8px;color:#3583c0;font-weight:normal;">College Prep v 13 Optional Writing Pr...</div>
<div class="a" style="left:744px;top:843px;width:21px;height:14px;border:1.5px solid #0770b5;color:#0770b5;font-size:10.4px;font-weight:bold;line-height:12.5px;text-align:center;letter-spacing:0px;">EA</div>
<div class="t" style="left:418px;top:862.5px;font-size:12.1px;color:#2d3b45;font-weight:normal;">Other Subjects</div>
<div class="a" style="left:507px;top:863px;width:1px;height:12px;background:#c7cdd1;"></div>
<div class="t" style="left:515px;top:862.5px;font-size:12.1px;color:#2d3b45;font-weight:normal;">US:...</div>
<div class="a" style="left:553px;top:863px;width:1px;height:12px;background:#c7cdd1;"></div>
<div class="t" style="left:561px;top:862.5px;font-size:12.1px;color:#2d3b45;font-weight:normal;">College and Career Readiness (2020)</div>
<div class="t" style="left:418px;top:879.5px;font-size:11.3px;color:#2a7ab9;font-weight:normal;">LUCO</div>
<div class="t" style="left:782px;top:855px;font-size:14.8px;color:#2d3b45;font-weight:normal;">02/28/24</div>
<div class="a" style="left:871px;top:856px;width:22px;height:22px;border-radius:50%;background:#6ca41e;"></div>
<div class="t" style="left:906px;top:848px;font-size:14.2px;color:#2d3b45;font-weight:normal;">Available</div>
<div class="t" style="left:906px;top:867px;font-size:12.6px;color:#a9b0b5;font-weight:normal;">09/05/24 - 06/26/25</div>
<svg class="a" style="left:1133px;top:855px" width="18" height="18" viewBox="0 0 18 18" fill="none" stroke="#ccd1d4" stroke-width="1.1">
<rect x="2.5" y="5.5" width="3" height="8"/><rect x="7.8" y="1.8" width="3" height="11.7"/><rect x="13" y="7.5" width="3" height="6"/>
<path d="M1 15.8 H17" stroke-width="1.4"/></svg>
<div class="a" style="left:1173px;top:844px;width:85px;height:36px;background:#f5f5f5;border:1px solid #d3d7da;border-radius:4px;"></div>
<div class="t" style="left:1186px;top:857px;font-size:12.4px;color:#2d3b45;font-weight:normal;">MANAGE</div>
<svg class="a" style="left:1308px;top:853px" width="9" height="22" viewBox="0 0 9 22" fill="none" stroke="#0770b5" stroke-width="1.8">
<circle cx="4.3" cy="4.3" r="2"/><circle cx="4.3" cy="11" r="2"/><circle cx="4.3" cy="17.8" r="2"/></svg>
<div class="a" style="left:335px;top:903px;width:1000px;height:1px;background:#c7cdd1;"></div>
<div class="a" style="left:1538px;top:120px;width:32px;height:32px;border-radius:50%;background:#f26b00;box-shadow:0 4px 9px rgba(0,0,0,0.18);"></div>
<div class="a" style="left:1547px;top:129px;width:14px;height:14px;border-radius:50%;background:#fff;color:#f26b00;font-size:11px;font-weight:bold;line-height:14px;text-align:center;">?</div>
<div class="a" style="z-index:5;left:1540px;top:398px;width:90px;height:52px;border-radius:26px;background:#fff;box-shadow:0 0 0 2px rgba(0,0,0,0.045),0 0 2px 6px rgba(0,0,0,0.06);"></div>
<svg class="a" style="z-index:6;left:1550px;top:400px" width="45" height="45" viewBox="1550 400 45 45">
<circle cx="1576.7" cy="410.6" r="3.4" fill="#e8572a"/>
<path d="M1566.3 418.3 L1574.6 418.3 L1564.2 428.8 L1561.5 428.8 Q1559 428.5 1560.2 425.5 Z" fill="#e8572a" stroke="#e8572a" stroke-width="1" stroke-linejoin="round"/>
<path d="M1580.3 419.6 L1586 419.6 Q1589.2 420.2 1587.3 423.5 L1582.6 429.6 L1573.8 429.6 Z" fill="#f0922a" stroke="#f0922a" stroke-width="1" stroke-linejoin="round"/>
<circle cx="1570.5" cy="437" r="3.3" fill="#f0922a"/>
</svg>

<div id="rsc"></div>
<div id="rthumb"></div>
<svg class="a" style="left:1588px;top:888px;z-index:9" width="12" height="12" viewBox="0 0 12 12"><path d="M12 0 A12 12 0 0 1 0 12 H12 Z" fill="#1e1e1e"/></svg>
<div class="a" style="left:0;top:0;width:2px;height:2px;background:#333;"></div>
</body></html>
